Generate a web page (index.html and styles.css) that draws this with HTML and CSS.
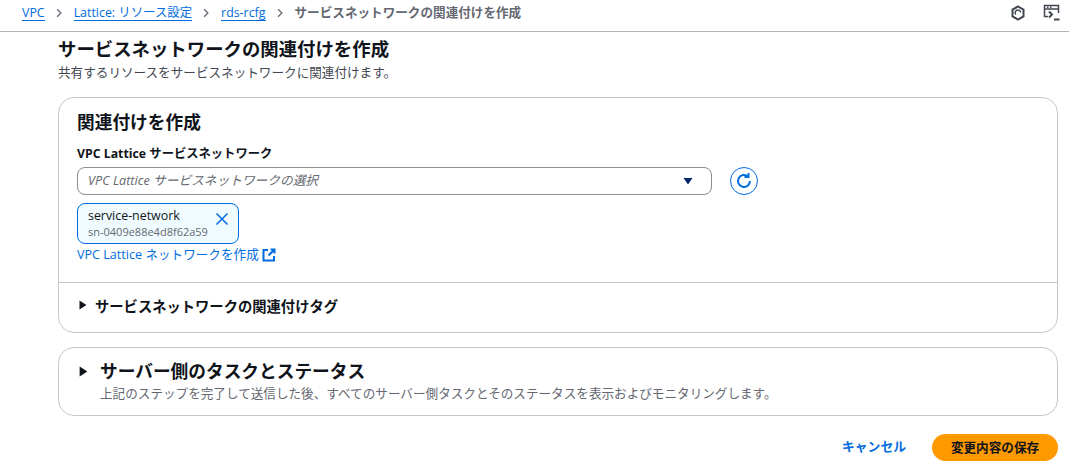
FILE: index.html
```html
<!DOCTYPE html>
<html lang="ja">
<head>
<meta charset="utf-8">
<title>サービスネットワークの関連付けを作成</title>
<link rel="stylesheet" href="styles.css">
</head>
<body>
<header class="topbar">
  <nav class="crumbs">
    <a class="link-u" href="#">VPC</a>
    <svg class="chev" viewBox="0 0 16 16"><path d="M5 2l6 6-6 6"/></svg>
    <a class="link-u" href="#">Lattice: リソース設定</a>
    <svg class="chev" viewBox="0 0 16 16"><path d="M5 2l6 6-6 6"/></svg>
    <a class="link-u" href="#">rds-rcfg</a>
    <svg class="chev" viewBox="0 0 16 16"><path d="M5 2l6 6-6 6"/></svg>
    <span class="current">サービスネットワークの関連付けを作成</span>
  </nav>
  <div class="tools">
    <svg class="tool" viewBox="0 0 16 16"><path class="hex" d="M8 1.500l5.500 3.200v6.600L8 14.500l-5.500-3.200V4.700z"/><path class="thin" d="M5.700 9.500A2.800 2.800 0 1 1 10.700 7.500"/></svg>
    <svg class="tool term" viewBox="0 0 18 18"><path class="thin" d="M5 12.500H1.500V1.500h14V9"/><path class="thin" d="M1.500 5h14"/><path class="thin" d="M4 3.200h1.500M7 3.200h1.500"/><path class="thin2" d="M6 7.500l3 3-3 3"/><path class="thin2" d="M11 15.500h5.500"/></svg>
  </div>
</header>
<main class="page">
  <h1 class="title">サービスネットワークの関連付けを作成</h1>
  <p class="desc">共有するリソースをサービスネットワークに関連付けます。</p>
  <section class="card">
    <div class="card-body">
      <h2 class="card-title">関連付けを作成</h2>
      <div class="label">VPC Lattice サービスネットワーク</div>
      <div class="select-row">
        <div class="select">
          <span class="placeholder">VPC Lattice サービスネットワークの選択</span>
          <svg class="caret" viewBox="0 0 10 8"><path d="M0.500 1h9L5 7.500z"/></svg>
        </div>
        <button class="refresh" type="button" aria-label="refresh">
          <svg viewBox="0 0 16 16"><path class="ref" d="M14 8A6 6 0 1 1 12 3.500"/><path class="ref" d="M12.500 0v4H8.500"/></svg>
        </button>
      </div>
      <div class="token">
        <div class="token-text">
          <div class="token-name">service-network</div>
          <div class="token-id">sn-0409e88e4d8f62a59</div>
        </div>
        <svg class="token-x" viewBox="0 0 14 14"><path d="M1.500 1.500l11 11M12.500 1.500l-11 11"/></svg>
      </div>
      <a class="create" href="#">VPC Lattice ネットワークを作成
        <svg class="ext" viewBox="0 0 14 14"><path d="M6 2H1.500v10.500H12V8"/><path d="M8.500 1.500h4v4M12.500 1.500L6.500 7.500"/></svg>
      </a>
    </div>
    <div class="expander">
      <svg class="tri" viewBox="0 0 8 10"><path d="M0.500 0.500v9L7.500 5z"/></svg>
      <span class="expander-label">サービスネットワークの関連付けタグ</span>
    </div>
  </section>
  <section class="card status">
    <div class="status-head">
      <svg class="tri big" viewBox="0 0 8 10"><path d="M0.500 0.500v9L7.500 5z"/></svg>
      <h2 class="status-title">サーバー側のタスクとステータス</h2>
    </div>
    <p class="status-desc">上記のステップを完了して送信した後、すべてのサーバー側タスクとそのステータスを表示およびモニタリングします。</p>
  </section>
  <div class="actions">
    <a class="cancel" href="#">キャンセル</a>
    <button class="save" type="button">変更内容の保存</button>
  </div>
</main>
</body>
</html>
```
FILE: styles.css
```css
* { box-sizing: border-box; }
html, body { margin: 0; padding: 0; }
body {
  width: 1069px;
  height: 468px;
  overflow: hidden;
  background: #fff;
  color: #0f141a;
  font-family: "Open Sans", "Noto Sans CJK JP", sans-serif;
  font-size: 12.6px;
}
a { text-decoration: none; }
.topbar {
  height: 32px;
  border-bottom: 1px solid #b4b4bb;
  display: flex;
  align-items: center;
  justify-content: space-between;
  padding: 0 8px 6px 22px;
}
.crumbs { display: flex; align-items: center; font-size: 12.6px; line-height: 16px; }
.link-u { color: #006ce0; border-bottom: 1px solid #006ce0; line-height: 15px; font-size: 12.400px; }
.chev { width: 10px; height: 10px; margin: 0 10px 0 9px; fill: none; stroke: #656871; stroke-width: 2; }
.current { font-weight: 600; color: #656871; }
.tools { display: flex; align-items: center; gap: 17px; }
.tool { width: 16px; height: 16px; fill: none; stroke: #424650; }
.term { width: 18px; height: 18px; }
.hex { stroke-width: 2; }
.thin { stroke-width: 1.500; }
.thin2 { stroke-width: 2; }
.page { padding: 0 11px 0 58px; }
.title { margin: 5px 0 0; font-size: 18.400px; line-height: 24px; font-weight: 700; }
.desc { margin: 4px 0 0; font-size: 12.6px; line-height: 16px; color: #424650; }
.card {
  margin-top: 16px;
  border: 1px solid #c6c6cd;
  border-radius: 16px;
  background: #fff;
}
.card-body { padding: 12px 18px 18px; border-bottom: 1px solid #c6c6cd; height: 185px; }
.card-title { margin: 0; font-size: 17.700px; line-height: 24px; font-weight: 700; }
.label { margin-top: 12px; font-size: 12.3px; line-height: 16px; font-weight: 700; }
.select-row { display: flex; align-items: center; gap: 18px; margin-top: 5px; }
.select {
  width: 635px;
  height: 28px;
  border: 1px solid #8c8c94;
  border-radius: 8px;
  padding: 0 18px 0 10px;
  display: flex;
  align-items: center;
  justify-content: space-between;
}
.placeholder { font-style: italic; color: #656871; font-size: 12.700px; line-height: 16px; margin-bottom: 3px; }
.caret { width: 10px; height: 8px; fill: #002a66; }
.refresh {
  width: 28px;
  height: 28px;
  border: 1px solid #006ce0;
  border-radius: 50%;
  background: #fff;
  padding: 0;
  display: flex;
  align-items: center;
  justify-content: center;
}
.refresh svg { width: 16px; height: 16px; fill: none; }
.ref { stroke: #006ce0; stroke-width: 2; fill: none; }
.token {
  margin-top: 8px;
  width: 162px;
  height: 41px;
  border: 1px solid #006ce0;
  border-radius: 8px;
  background: #f0fbff;
  padding: 3px 9px 0 10px;
  display: flex;
  justify-content: space-between;
}
.token-name { font-size: 12.400px; line-height: 17px; }
.token-id { font-size: 11px; line-height: 15px; color: #656871; }
.token-x { width: 14px; height: 14px; margin-top: 5px; fill: none; stroke: #006ce0; stroke-width: 1.500; }
.create { display: flex; align-items: center; gap: 3px; margin-top: 3px; color: #006ce0; font-size: 12.6px; line-height: 16px; }
.ext { width: 14px; height: 14px; fill: none; stroke: #006ce0; stroke-width: 2; }
.expander { display: flex; align-items: center; height: 49px; padding: 0 0 5px 20px; gap: 8px; }
.tri { width: 8px; height: 10px; fill: #0f141a; }
.tri.big { width: 9px; height: 11px; }
.expander-label { font-size: 14.300px; font-weight: 700; color: #0f141a; }
.status { margin-top: 14px; height: 69px; padding: 11px 18px 0 20px; }
.status-head { display: flex; align-items: center; gap: 12px; }
.status-title { margin: 0; font-size: 17.700px; line-height: 24px; font-weight: 700; }
.status-desc { margin: 3px 0 0 21px; font-size: 12.600px; line-height: 16px; color: #656871; }
.actions { display: flex; justify-content: flex-end; align-items: center; gap: 26px; margin-top: 18px; }
.cancel { color: #006ce0; font-weight: 700; font-size: 12.800px; line-height: 16px; margin-bottom: 3px; }
.save {
  width: 126px;
  height: 27px;
  border: 0;
  border-radius: 14px;
  background: #ff9900;
  color: #0f141a;
  font: 700 12.600px "Open Sans", "Noto Sans CJK JP", sans-serif;
  padding: 0 0 3px;
}
```
